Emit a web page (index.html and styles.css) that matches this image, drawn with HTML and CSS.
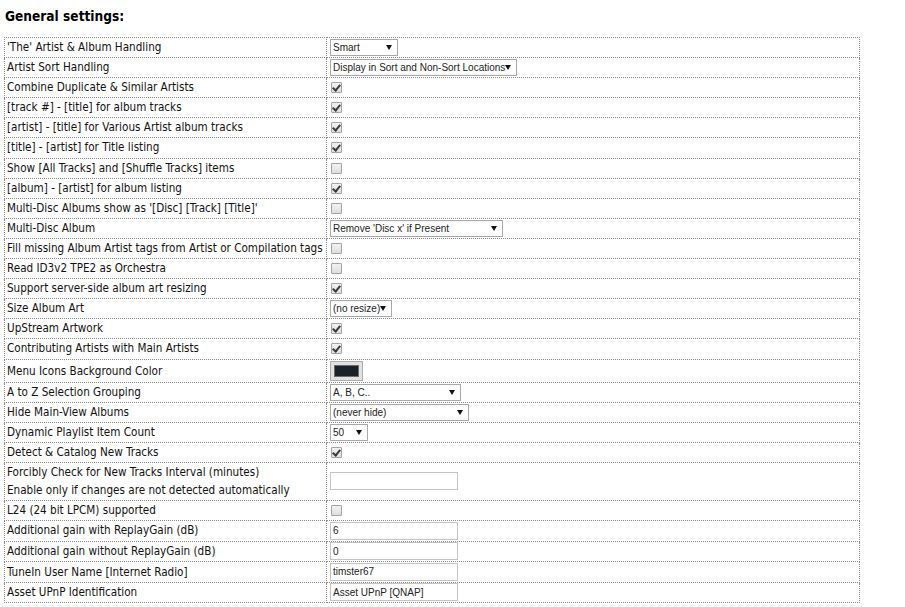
FILE: index.html
```html
<!DOCTYPE html>
<html>
<head>
<meta charset="utf-8">
<title>General settings</title>
<link rel="stylesheet" href="styles.css">
</head>
<body>
<h3 class="section-title">General settings:</h3>
<table class="settings">
  <colgroup><col class="col-label"><col></colgroup>
  <tr><td>'The' Artist &amp; Album Handling</td>
      <td><span class="dropdown w-68"><select><option>Smart</option></select></span></td></tr>
  <tr><td>Artist Sort Handling</td>
      <td><span class="dropdown w-187"><select><option>Display in Sort and Non-Sort Locations</option></select></span></td></tr>
  <tr><td>Combine Duplicate &amp; Similar Artists</td><td><input type="checkbox" checked></td></tr>
  <tr><td>[track #] - [title] for album tracks</td><td><input type="checkbox" checked></td></tr>
  <tr><td>[artist] - [title] for Various Artist album tracks</td><td><input type="checkbox" checked></td></tr>
  <tr><td>[title] - [artist] for Title listing</td><td><input type="checkbox" checked></td></tr>
  <tr><td>Show [All Tracks] and [Shuffle Tracks] items</td><td><input type="checkbox"></td></tr>
  <tr><td>[album] - [artist] for album listing</td><td><input type="checkbox" checked></td></tr>
  <tr><td>Multi-Disc Albums show as '[Disc] [Track] [Title]'</td><td><input type="checkbox"></td></tr>
  <tr><td>Multi-Disc Album</td>
      <td><span class="dropdown w-173"><select><option>Remove 'Disc x' if Present</option></select></span></td></tr>
  <tr><td>Fill missing Album Artist tags from Artist or Compilation tags</td><td><input type="checkbox"></td></tr>
  <tr><td>Read ID3v2 TPE2 as Orchestra</td><td><input type="checkbox"></td></tr>
  <tr><td>Support server-side album art resizing</td><td><input type="checkbox" checked></td></tr>
  <tr><td>Size Album Art</td>
      <td><span class="dropdown w-62"><select><option>(no resize)</option></select></span></td></tr>
  <tr><td>UpStream Artwork</td><td><input type="checkbox" checked></td></tr>
  <tr><td>Contributing Artists with Main Artists</td><td><input type="checkbox" checked></td></tr>
  <tr class="row-color"><td>Menu Icons Background Color</td>
      <td><button type="button" class="swatch-btn"><span class="swatch"></span></button></td></tr>
  <tr><td>A to Z Selection Grouping</td>
      <td><span class="dropdown w-131"><select><option>A, B, C..</option></select></span></td></tr>
  <tr><td>Hide Main-View Albums</td>
      <td><span class="dropdown w-139"><select><option>(never hide)</option></select></span></td></tr>
  <tr><td>Dynamic Playlist Item Count</td>
      <td><span class="dropdown w-38"><select><option>50</option></select></span></td></tr>
  <tr><td>Detect &amp; Catalog New Tracks</td><td><input type="checkbox" checked></td></tr>
  <tr><td>Forcibly Check for New Tracks Interval (minutes)<br>Enable only if changes are not detected automatically</td>
      <td><input type="text" class="field" value=""></td></tr>
  <tr><td>L24 (24 bit LPCM) supported</td><td><input type="checkbox"></td></tr>
  <tr><td>Additional gain with ReplayGain (dB)</td><td><input type="text" class="field" value="6"></td></tr>
  <tr><td>Additional gain without ReplayGain (dB)</td><td><input type="text" class="field" value="0"></td></tr>
  <tr><td>TuneIn User Name [Internet Radio]</td><td><input type="text" class="field" value="timster67"></td></tr>
  <tr><td>Asset UPnP Identification</td><td><input type="text" class="field" value="Asset UPnP [QNAP]"></td></tr>
</table>
</body>
</html>
```
FILE: styles.css
```css
html, body {
  margin: 0;
  background: #fff;
}

body {
  padding: 0 4px;
  color: #111;
  font-family: "DejaVu Sans Condensed", "Liberation Sans", sans-serif;
  font-size: 11.6px;
}

.section-title {
  margin: 0;
  padding: 8px 0 0 1px;
  height: 37px;
  box-sizing: border-box;
  font-size: 13.6px;
  line-height: 17px;
  font-weight: bold;
  color: #000;
}

.settings {
  width: 856px;
  table-layout: fixed;
  border-collapse: collapse;
  border: 1px dotted #8a8a8a;
}

.col-label {
  width: 322px;
}

.settings td {
  border: 1px dotted #8a8a8a;
  padding: 0 2px 1.1px 2px;
  line-height: 18px;
  vertical-align: middle;
  white-space: nowrap;
  overflow: hidden;
}

.settings td + td {
  padding-left: 3px;
}

/* drop-down lists */
.dropdown {
  position: relative;
  display: inline-block;
  vertical-align: middle;
  height: 17px;
}

.dropdown select {
  -webkit-appearance: none;
  appearance: none;
  width: 100%;
  height: 17px;
  margin: 0;
  padding: 0 9px 0 2px;
  border: 1px solid #a9a9a9;
  border-radius: 0;
  background: #fff;
  color: #222;
  font-family: "Liberation Sans", Arial, sans-serif;
  font-size: 10px;
  line-height: 15px;
  display: block;
}

.dropdown::after {
  content: "";
  position: absolute;
  right: 6px;
  top: 6px;
  border-left: 3px solid transparent;
  border-right: 3px solid transparent;
  border-top: 5px solid #111;
  pointer-events: none;
}

.w-68 { width: 68px; }
.w-187 { width: 187px; }
.w-173 { width: 173px; }
.w-62 { width: 62px; }
.w-131 { width: 131px; }
.w-139 { width: 139px; }
.w-38 { width: 38px; }

/* check boxes */
.settings input[type="checkbox"] {
  -webkit-appearance: none;
  appearance: none;
  position: relative;
  width: 11px;
  height: 11px;
  margin: 0 0 0 1px;
  border: 1px solid #a4a4a4;
  border-radius: 1px;
  background: linear-gradient(#f2f2f2, #dedede);
  vertical-align: middle;
  box-sizing: border-box;
}

.settings input[type="checkbox"]:checked::after {
  content: "";
  position: absolute;
  left: 2px;
  top: 0px;
  width: 3px;
  height: 6px;
  border-right: 2px solid #3a3a3a;
  border-bottom: 2px solid #3a3a3a;
  transform: rotate(40deg);
}

/* colour picker button */
.row-color td {
  padding-top: 1px;
  padding-bottom: 1px;
}

.swatch-btn {
  display: block;
  width: 33px;
  height: 20px;
  margin: 0;
  padding: 3px 3px;
  border: 1px solid #adadad;
  background: #e1e1e1;
  box-sizing: border-box;
}

.swatch {
  display: block;
  width: 100%;
  height: 100%;
  background: #1b212b;
  border: 1px solid #6a6a6a;
  box-sizing: border-box;
}

/* text fields */
.field {
  display: inline-block;
  vertical-align: middle;
  width: 128px;
  height: 18px;
  margin: 0;
  padding: 0 2px;
  border: 1px solid #c4c4c4;
  box-sizing: border-box;
  background: #fff;
  color: #222;
  font-family: "Liberation Sans", Arial, sans-serif;
  font-size: 10px;
}
```
